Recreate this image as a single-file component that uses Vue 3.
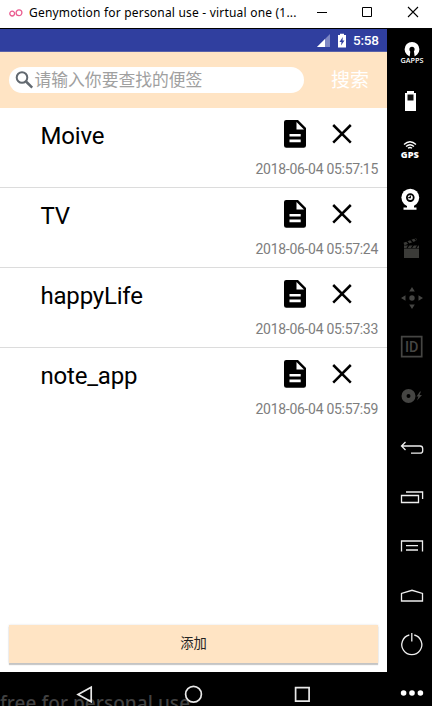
<script setup>
const notes = [
  { title: 'Moive', time: '2018-06-04 05:57:15' },
  { title: 'TV', time: '2018-06-04 05:57:24' },
  { title: 'happyLife', time: '2018-06-04 05:57:33' },
  { title: 'note_app', time: '2018-06-04 05:57:59' },
]
</script>

<template>
  <div class="window">
    <header class="titlebar">
      <svg class="logo" width="14" height="8" viewBox="0 0 14 8" fill="none" stroke="#ea5c90" stroke-width="1.3">
        <circle cx="3.2" cy="4.6" r="2.4" /><circle cx="10" cy="3.8" r="2.9" />
      </svg>
      <span class="caption">Genymotion for personal use - virtual one (1...</span>
      <div class="controls">
        <svg width="112" height="12" viewBox="0 0 112 12" fill="none" stroke="#000" stroke-width="1">
          <path d="M0 6.500H10M45.500 1.500h9v9h-9z" /><path d="M91 1l10 10M101 1L91 11" stroke-width="1.1" />
        </svg>
      </div>
    </header>

    <div class="body">
      <main class="device">
        <div class="status">
          <svg width="30" height="15" viewBox="0 0 30 15">
            <path d="M0 14L13 1V14z" fill="#7f88c4" /><path d="M0 14L8 6V14z" fill="#fff" />
            <path d="M21 2h2V.7h4V2h2v12.500h-8z" fill="#fff" />
            <path d="M25.800 4l-3.300 5h2l-.5 3.500 3.500-5h-2z" fill="#303f9f" />
          </svg>
          <span class="clock">5:58</span>
        </div>

        <div class="search-bar">
          <div class="search-field">
            <svg width="24" height="24" viewBox="0 0 24 24" fill="none" stroke="#626970">
              <circle cx="9" cy="9.500" r="5.300" stroke-width="2" /><path d="M13 13.500l6.200 6.200" stroke-width="2.500" />
            </svg>
            <span>请输入你要查找的便签</span>
          </div>
          <span class="search-action">搜索</span>
        </div>

        <div class="list">
          <div v-for="note in notes" :key="note.time" class="row">
            <div class="row-top">
              <span class="note-title">{{ note.title }}</span>
              <svg class="doc" width="22" height="28" viewBox="0 0 22 28">
                <path d="M2.500 0H14l8 8v17.500a2.300 2.300 0 0 1-2.300 2.300H2.300A2.300 2.300 0 0 1 0 25.500v-23A2.400 2.400 0 0 1 2.500 0z" fill="#000" />
                <path d="M12.500 2v7.500h7.500zM5.500 14h11.200v2.500H5.500zM5.500 19.500h11.200V22.200H5.500z" fill="#fff" />
              </svg>
              <svg class="cross" width="20" height="20" viewBox="0 0 20 20">
                <path d="M1.200 1l17.600 17.600M18.800 1L1.200 18.600" fill="none" stroke="#000" stroke-width="2.500" />
              </svg>
            </div>
            <span class="time">{{ note.time }}</span>
          </div>
        </div>

        <div class="footer"><div class="add">添加</div></div>

        <nav class="nav">
          <span class="watermark">free for personal use</span>
          <svg class="nav-icons" width="387" height="34" viewBox="0 0 387 34" fill="none" stroke="#e8e8e8" stroke-width="1.700">
            <path d="M91.200 15.200v14.600L78 22.500z" /><circle cx="193.500" cy="22.300" r="7.900" />
            <path d="M295.600 15.600h13.500v13.500h-13.500z" />
          </svg>
        </nav>
      </main>

      <aside class="tools">
        <svg class="tool" viewBox="0 0 45 49">
          <circle cx="25" cy="21.300" r="5" fill="none" stroke="#fff" stroke-width="4.800" />
          <path d="M23.800 20h2.700l1.200 9h-5.100z" fill="#000" />
          <text x="13.500" y="34.500" textLength="23" lengthAdjust="spacingAndGlyphs" class="gapps">GAPPS</text>
        </svg>
        <svg class="tool" viewBox="0 0 45 49">
          <path d="M18 16h2v-2h7v2h2v18H18z" fill="#fff" /><path d="M20.500 17.500h6v6h-6z" fill="#111" />
        </svg>
        <svg class="tool" viewBox="0 0 45 49">
          <g fill="none" stroke="#fff" stroke-width="1.300">
            <path d="M17 18.500q6-5.500 12 0M19 20.500q4-3.500 8 0M21 22.300q2-1.600 4 0" />
          </g>
          <text x="13.800" y="32.300" textLength="18" lengthAdjust="spacingAndGlyphs" class="gps">GPS</text>
        </svg>
        <svg class="tool" viewBox="0 0 45 49">
          <circle cx="23.300" cy="22.600" r="8.900" fill="#fff" /><path d="M20 30h7v2.500h2.500v2.200h-13v-2.200H20z" fill="#fff" />
          <circle cx="23.300" cy="22.600" r="3.400" fill="#fff" stroke="#000" stroke-width="1.800" />
          <path d="M23.300 20.500v2.200h-2" fill="none" stroke="#000" stroke-width="1.200" />
        </svg>
        <svg class="tool" viewBox="0 0 45 49">
          <g fill="#3b3b38">
            <path d="M17 24.500h15V34H17z" /><path d="M16.500 18.700L29 14l1 2.500-12.500 4.700zM17 21.500h15V24H17z" />
          </g>
          <path d="M19.500 17l2.500 3M23.500 15.500l2.500 3M27.500 14l2 3M22 21l-2 3M26.500 21l-2 3M31 21l-2 3" stroke="#000" stroke-width="1.200" />
        </svg>
        <svg class="tool" viewBox="0 0 45 49">
          <circle cx="25" cy="25" r="2.700" fill="#454543" />
          <path d="M22.200 18.500h5.600L25 14zM22.200 31.500h5.600L25 36zM18.500 22.200v5.600L14 25zM31.500 22.200v5.600L36 25z" fill="#454543" />
        </svg>
        <svg class="tool" viewBox="0 0 45 49">
          <path d="M14.700 14.700h20v20h-20z" fill="none" stroke="#454543" stroke-width="1.700" />
          <text x="18" y="30" textLength="13.500" lengthAdjust="spacingAndGlyphs" class="id">ID</text>
        </svg>
        <svg class="tool" viewBox="0 0 45 49">
          <circle cx="21.500" cy="25" r="4.500" fill="none" stroke="#454543" stroke-width="5" />
          <path d="M33 20.500l-3.500 5h2l-1.500 4 5-5.500h-2.500l1.500-3.500z" fill="#454543" />
        </svg>
        <svg class="tool" viewBox="0 0 45 49">
          <path d="M18.500 22L14.500 26l4 4M14.500 26H33q2.700 0 2.700 2.700v2q0 2.500-2.700 2.500H24" class="line" />
        </svg>
        <svg class="tool" viewBox="0 0 45 49">
          <path d="M14.500 26.500h17v7h-17zM19 23h16.600v7" class="line" />
        </svg>
        <svg class="tool" viewBox="0 0 45 49">
          <path d="M14.500 33.500v-10.500h21v10.500M19 27.700h12M19 32h12" class="line" />
        </svg>
        <svg class="tool" viewBox="0 0 45 49">
          <path d="M14.500 34v-7.500L25 23.300l10.500 3.200V34z" class="line" />
        </svg>
        <svg class="tool" viewBox="0 0 45 49">
          <path d="M22.300 19A10 10 0 1 0 27.300 19M24.800 17v8.500" class="line" />
        </svg>
        <svg class="tool last" viewBox="0 0 45 41">
          <g fill="#fff"><circle cx="16.600" cy="28" r="2.800" /><circle cx="25" cy="28" r="2.800" /><circle cx="33.400" cy="28" r="2.800" /></g>
        </svg>
      </aside>
    </div>
  </div>
</template>

<style>
body { margin: 0; overflow: hidden; }
</style>

<style scoped>
.window { width: 432px; height: 706px; overflow: hidden; display: flex; flex-direction: column; background: #000; font-family: Roboto, "Noto Sans CJK SC", sans-serif; white-space: nowrap; }
svg { display: block; flex: none; }
.titlebar { box-sizing: border-box; height: 28px; flex: none; display: flex; align-items: center; padding: 0 3px 2px 9px; background: #fff; }
.caption { width: 269px; margin-left: 6px; font: 12px/16px "Noto Sans", sans-serif; letter-spacing: 0.2px; color: #000; }
.controls { margin: -2px 0 0 19px; }
.body { flex: 1; display: flex; min-height: 0; }
.device { width: 387px; flex: none; display: flex; flex-direction: column; background: #fff; border-top: 1px solid #000; }
.status { box-sizing: border-box; height: 23px; flex: none; display: flex; align-items: center; justify-content: flex-end; padding-right: 7px; background: #303f9f; border-bottom: 1px solid #5a62a9; }
.clock { width: 27px; margin-left: 6px; font-size: 13.5px; line-height: 22px; font-weight: 500; letter-spacing: -0.2px; color: #fff; }
.search-bar { height: 56px; flex: none; display: flex; align-items: center; padding-left: 9px; background: #ffe4c4; }
.search-field { width: 291px; height: 26px; display: flex; align-items: center; padding-left: 4px; border-radius: 13px; background: #fff; color: #a0a0a0; font-size: 16.8px; line-height: 26px; }
.search-field svg { margin-right: -2.5px; }
.search-action { margin-left: 27px; padding-top: 2px; font-size: 19px; line-height: 28px; color: #fff; }
.list { flex: 1; }
.row { box-sizing: border-box; height: 80px; display: flex; flex-direction: column; border-bottom: 1px solid #dcdcdc; }
.row:last-child { border-bottom-color: transparent; }
.row-top { height: 52px; display: flex; align-items: center; padding-left: 41px; }
.note-title { width: 243px; margin-left: -0.5px; margin-right: 0.5px; font-size: 24px; line-height: 32px; letter-spacing: -0.2px; color: #000; padding-top: 4px; }
.cross { margin-left: 26px; }
.time { align-self: flex-end; margin-right: 9px; font-size: 14px; line-height: 18px; letter-spacing: -0.3px; color: #7e7e7e; }
.footer { padding: 0 9px 9px; }
.add { box-sizing: border-box; height: 38px; display: flex; align-items: center; justify-content: center; background: #ffe4c4; box-shadow: 0 2px 1px rgba(0, 0, 0, 0.2), 0 0 2px rgba(0, 0, 0, 0.12); font-size: 13.3px; line-height: 18px; color: #222; }
.nav { position: relative; height: 34px; flex: none; background: #000; overflow: hidden; }
.watermark { position: absolute; left: 0; top: 18px; font: 500 19px/26px "Noto Sans", sans-serif; letter-spacing: 0.05px; color: #424242; }
.nav-icons { position: relative; }
.tools { width: 45px; display: flex; flex-direction: column; background: #000; }
.tool { width: 45px; height: 49px; }
.tool.last { height: 41px; }
.line { fill: none; stroke: #eee; stroke-width: 1.3; }
.gapps { font: 600 6.8px "Open Sans", sans-serif; fill: #fff; }
.gps { font: 900 8px "Open Sans", sans-serif; fill: #fff; }
.id { font: 500 15px Roboto, sans-serif; fill: #454543; }
</style>
